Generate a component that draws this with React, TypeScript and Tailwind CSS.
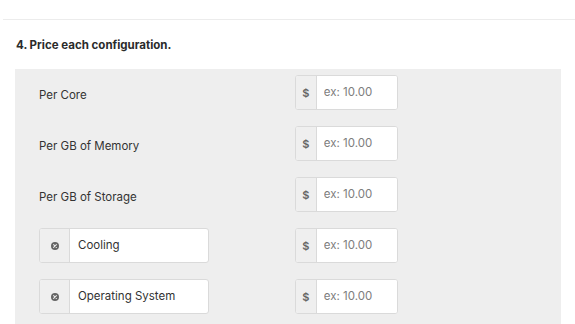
const font = { fontFamily: "Inter, 'Liberation Sans', sans-serif" };

type Row = { label: string; custom?: boolean };

const rows: Row[] = [
  { label: "Per Core" },
  { label: "Per GB of Memory" },
  { label: "Per GB of Storage" },
  { label: "Cooling", custom: true },
  { label: "Operating System", custom: true },
];

function RemoveIcon() {
  return (
    <svg width="8" height="8" viewBox="0 0 8 8">
      <circle cx="4" cy="4" r="4" fill="#666" />
      <path d="M2.6 2.6 L5.4 5.4 M5.4 2.6 L2.6 5.4" stroke="#eee" strokeWidth="1.1" strokeLinecap="round" />
    </svg>
  );
}

function PriceInput() {
  return (
    <div className="flex h-[35px] w-[103px] overflow-hidden rounded-[3px] border border-[#dadada] bg-white">
      <span className="flex w-[27px] items-center justify-center border-r border-[#dadada] bg-[#efefef] text-[11px] font-semibold text-[#666]">
        $
      </span>
      <input
        className="w-full min-w-0 bg-white px-[7px] text-[11.5px] text-[#333] outline-none placeholder:text-[#7d7d7d]"
        placeholder="ex: 10.00"
        style={font}
      />
    </div>
  );
}

export default function App() {
  return (
    <div className="min-h-screen bg-white pt-[19px]" style={font}>
      <div className="ml-[3px] border-t border-[#ececec]" />
      <h2 className="ml-[16px] mt-[17px] text-[11.5px] font-bold text-[#2b2b2b]">4. Price each configuration.</h2>
      <div className="ml-[15px] mt-[15px] w-[546px] bg-[#eeeeee] pb-[12px] pl-[24px] pt-[6px]">
        <div className="flex flex-col gap-[16px]">
          {rows.map((r) => (
            <div key={r.label} className="flex h-[35px] items-center">
              <div className="w-[256px]">
                {r.custom ? (
                  <div className="flex h-[35px] w-[170px] overflow-hidden rounded-[3px] border border-[#dadada] bg-white">
                    <span className="flex w-[30px] items-center justify-center border-r border-[#dadada] bg-[#efefef]">
                      <RemoveIcon />
                    </span>
                    <span className="flex items-center pl-[8px] text-[11.5px] text-[#333]">{r.label}</span>
                  </div>
                ) : (
                  <span className="text-[11.5px] text-[#333]">{r.label}</span>
                )}
              </div>
              <PriceInput />
            </div>
          ))}
        </div>
      </div>
    </div>
  );
}
